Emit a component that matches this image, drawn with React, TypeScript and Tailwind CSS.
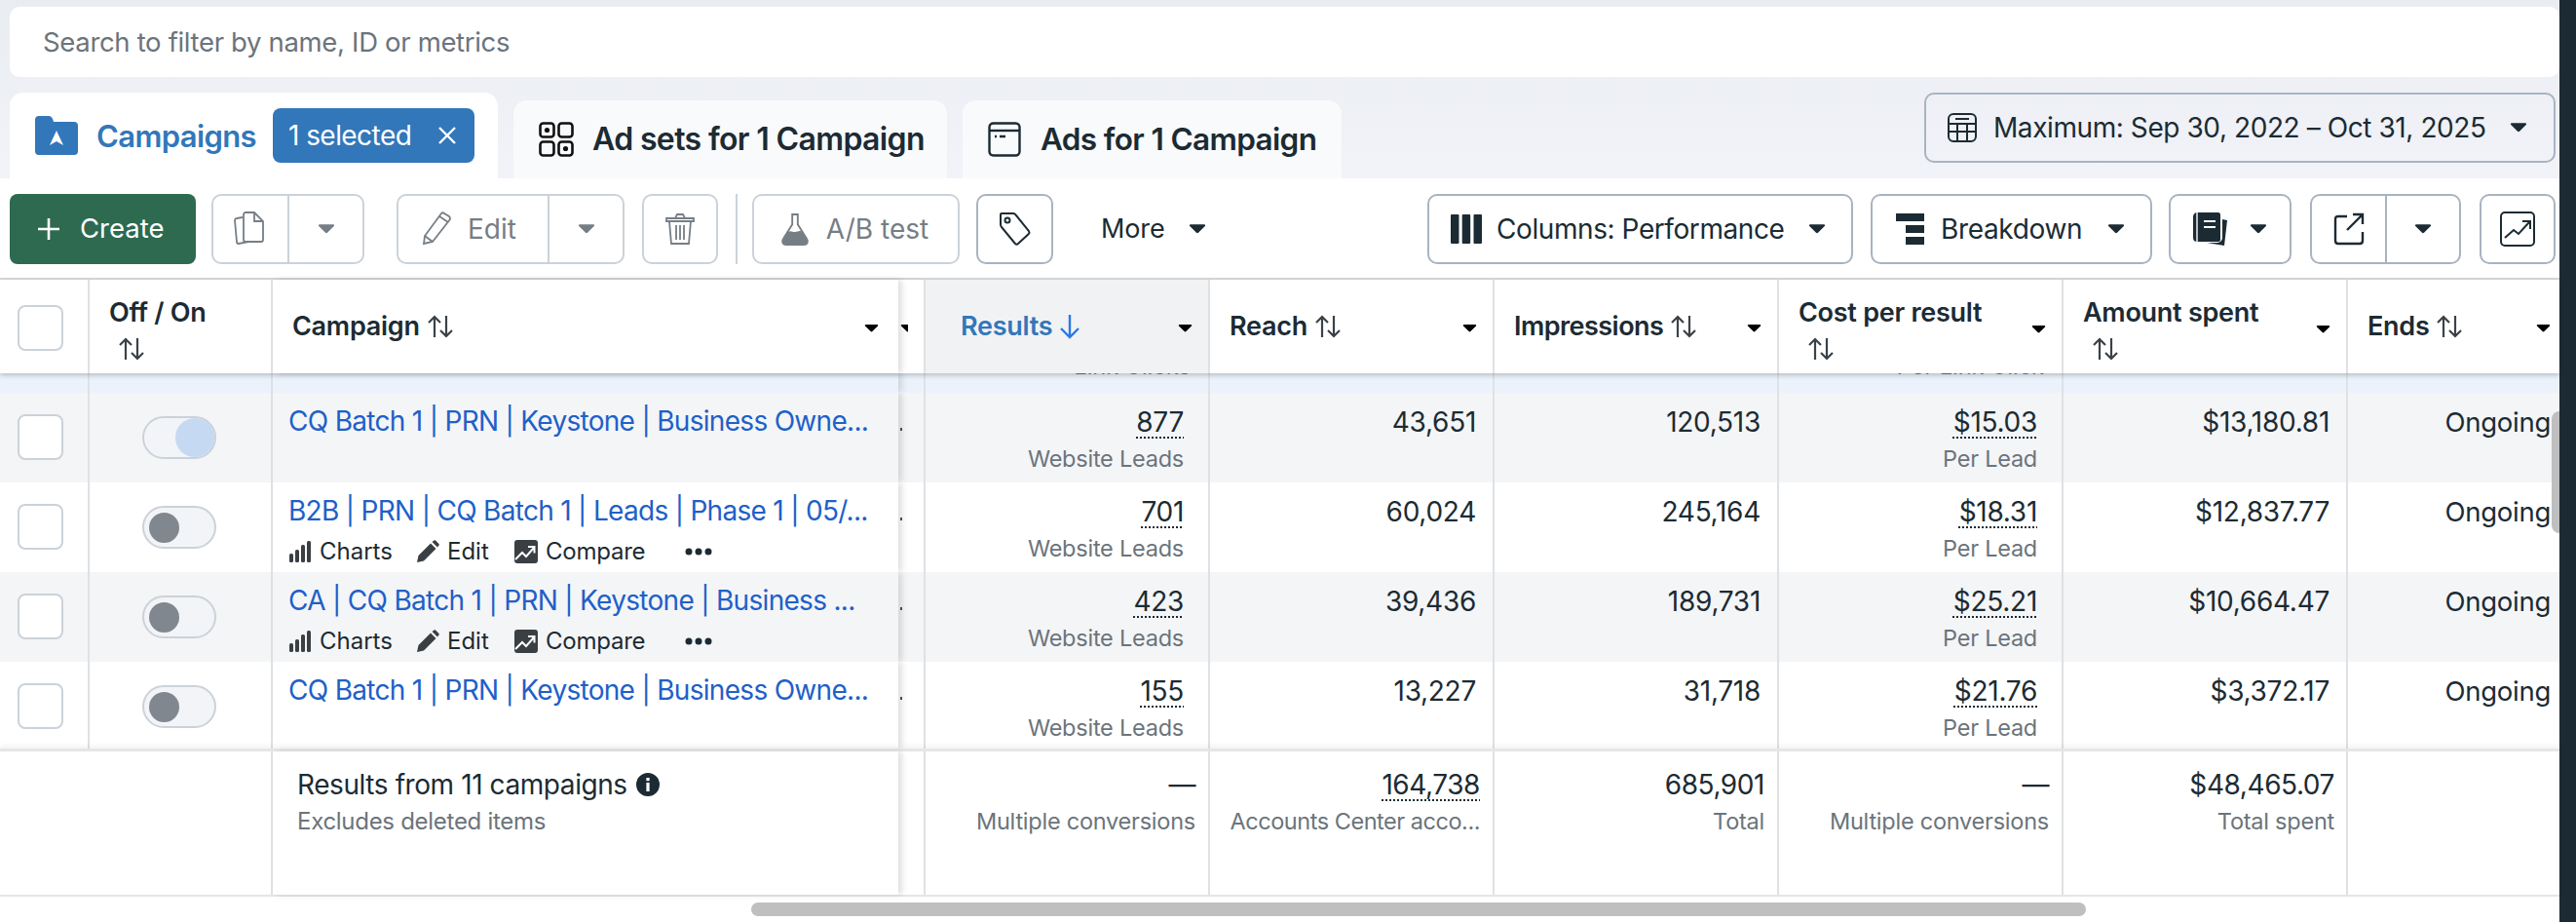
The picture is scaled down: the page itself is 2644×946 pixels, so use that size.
import React from "react";

const Caret = ({ c = "#1c2b33", w = 18 }: { c?: string; w?: number }) => (
  <svg width={w} height={w * 0.62} viewBox="0 0 18 11" className="shrink-0">
    <path d="M2 1.2h14c1 0 1.4 1 .8 1.7L10 9.6c-.6.6-1.4.6-2 0L1.2 2.9C.6 2.2 1 1.2 2 1.2z" fill={c} />
  </svg>
);

const SortArrows = () => (
  <svg width="30" height="26" viewBox="0 0 30 26" fill="none" stroke="#3a4248" strokeWidth="2.2" className="shrink-0">
    <path d="M9 24V3M3 9l6-6 6 6" />
    <path d="M21 2v21M15 17l6 6 6-6" />
  </svg>
);

const DownArrow = () => (
  <svg width="24" height="28" viewBox="0 0 24 28" fill="none" stroke="#2b78e4" strokeWidth="2.4" className="shrink-0">
    <path d="M12 2v23M3 16l9 9 9-9" />
  </svg>
);

const Tbtn = ({ cls, children }: { cls: string; children: React.ReactNode }) => (
  <div className={"h-[72px] rounded-[10px] border-2 flex items-center justify-center shrink-0 " + cls}>{children}</div>
);

const Toggle = ({ on }: { on?: boolean }) => (
  <div className={"w-[76px] h-[44px] rounded-full border-2 border-[#cbd2d9] bg-[#f2f4f8] flex items-center " + (on ? "justify-end" : "pl-[5px]")}>
    {on ? <div className="w-[40px] h-[40px] rounded-full bg-[#c5d9f2]" /> : <div className="w-[31px] h-[31px] rounded-full bg-[#80878f]" />}
  </div>
);

const Check = () => <div className="w-[47px] h-[47px] rounded-[8px] border-2 border-[#cbd2d9] bg-white" />;

const Actions = () => (
  <div className="flex items-center h-[36px] mt-[6px] text-[24px] text-[#1c2b33]">
    <svg width="24" height="24" viewBox="0 0 24 24" fill="#3a3f44" className="mr-[8px]">
      <rect x="1" y="14" width="4" height="9" rx="1.5" />
      <rect x="7" y="10" width="4" height="13" rx="1.5" />
      <rect x="13" y="5" width="4" height="18" rx="1.5" />
      <rect x="19" y="1" width="4" height="22" rx="1.5" />
    </svg>
    <span className="w-[99px]">Charts</span>
    <svg width="24" height="24" viewBox="0 0 24 24" fill="#3a3f44" className="mr-[8px]">
      <path d="M1 23l1.5-7L15 3.5l5.5 5.5L8 21.5z" />
      <path d="M16.5 2l2-1.5c.5-.4 1-.4 1.5 0l3.5 3.5c.4.5.4 1 0 1.5L22 7.5z" />
    </svg>
    <span className="w-[69px]">Edit</span>
    <svg width="24" height="24" viewBox="0 0 24 24" className="mr-[8px]">
      <rect x="0" y="0" width="24" height="24" rx="3" fill="#3a3f44" />
      <path d="M1 20l7-7 4 4 8-9M14 7h6.5v6.5" fill="none" stroke="#fff" strokeWidth="2" />
    </svg>
    <span className="w-[143px] tracking-[-0.01em]">Compare</span>
    <svg width="28" height="8" viewBox="0 0 28 8" fill="#1c2b33">
      <circle cx="4" cy="4" r="3.5" /><circle cx="14" cy="4" r="3.5" /><circle cx="24" cy="4" r="3.5" />
    </svg>
  </div>
);

const Metric = ({ w, v, sub, dotted }: { w: string; v: string; sub?: string; dotted?: boolean }) => (
  <div className={"h-full shrink-0 border-r-2 border-[#dfe1e4] flex flex-col items-end pt-[12px] " + w}>
    <div className={"leading-[36px] text-[28px] tracking-[-0.01em] text-[#1c2b33] " + (dotted ? "underline decoration-dotted decoration-2 underline-offset-[5px]" : "")}>{v}</div>
    {sub && <div className="leading-[40px] text-[23.5px] tracking-[-0.01em] text-[#6b747b]">{sub}</div>}
  </div>
);

type R = { name: string; on?: boolean; actions?: boolean; r: string; reach: string; imp: string; cpr: string; amt: string; bg: string };
const rows: R[] = [
  { name: "CQ Batch 1 | PRN | Keystone | Business Owne...", on: true, r: "877", reach: "43,651", imp: "120,513", cpr: "$15.03", amt: "$13,180.81", bg: "bg-[#f4f5f7]" },
  { name: "B2B | PRN | CQ Batch 1 | Leads | Phase 1 | 05/...", actions: true, r: "701", reach: "60,024", imp: "245,164", cpr: "$18.31", amt: "$12,837.77", bg: "bg-white" },
  { name: "CA | CQ Batch 1 | PRN | Keystone | Business ...", actions: true, r: "423", reach: "39,436", imp: "189,731", cpr: "$25.21", amt: "$10,664.47", bg: "bg-[#f4f5f7]" },
  { name: "CQ Batch 1 | PRN | Keystone | Business Owne...", r: "155", reach: "13,227", imp: "31,718", cpr: "$21.76", amt: "$3,372.17", bg: "bg-white" },
];

const Row = ({ d, h }: { d: R; h: string }) => (
  <div className={"flex overflow-hidden " + h + " " + d.bg}>
    <div className="w-[92px] shrink-0 border-r-2 border-[#dfe1e4] pl-[18px] pt-[22px]"><Check /></div>
    <div className="w-[188px] shrink-0 border-r-2 border-[#dfe1e4] pl-[54px] pt-[24px]"><Toggle on={d.on} /></div>
    <div className="w-[642px] shrink-0 pl-[16px] pt-[11px] shadow-[4px_0_6px_rgba(0,0,0,0.12)] relative">
      <div className="whitespace-nowrap leading-[36px] text-[28px] tracking-[-0.025em] text-[#2060c8]">{d.name}</div>
      {d.actions && <Actions />}
    </div>
    <div className="w-[28px] shrink-0 border-r-2 border-[#dfe1e4] pl-[2px] pt-[36px]"><div className="w-[2px] h-[3px] bg-[#4a5258]" /></div>
    <Metric w="w-[292px] pr-[25px]" v={d.r} sub="Website Leads" dotted />
    <Metric w="w-[292px] pr-[17px]" v={d.reach} />
    <Metric w="w-[292px] pr-[17px]" v={d.imp} />
    <Metric w="w-[292px] pr-[25px]" v={d.cpr} sub="Per Lead" dotted />
    <Metric w="w-[292px] pr-[17px]" v={d.amt} />
    <div className="flex-1 flex justify-end pr-[9px] pt-[12px] leading-[36px] text-[27.5px] tracking-[-0.01em] text-[#1c2b33]">Ongoing</div>
  </div>
);

const HeadCell = ({ w, label, wrap, extra, noCaret, children }: { w: string; label: string; wrap?: boolean; extra?: string; noCaret?: boolean; children?: React.ReactNode }) => (
  <div className={"h-full shrink-0 border-r-2 border-[#dfe1e4] flex justify-between pr-[16px] text-[27px] font-semibold tracking-[-0.01em] text-[#1c2b33] " + w + " " + (wrap ? "items-start pt-[16px]" : "items-center") + " " + (extra || "")}>
    {wrap ? (
      <div>
        <div className="leading-[36px]">{label}</div>
        <div className="h-[37px] flex items-center pl-[8px]"><SortArrows /></div>
      </div>
    ) : (
      <div className="flex items-center gap-[6px]"><span>{label}</span>{children || <SortArrows />}</div>
    )}
    {!noCaret && <div className={wrap ? "mt-[30px]" : "mt-[4px]"}><Caret c="#000" w={15} /></div>}
  </div>
);

const FootCell = ({ w, v, sub, dotted, subCls }: { w: string; v: string; sub: string; dotted?: boolean; subCls?: string }) => (
  <div className={"h-full shrink-0 border-r-2 border-[#dfe1e4] flex flex-col items-end pt-[16px] " + w}>
    <div className={"leading-[36px] text-[28px] tracking-[-0.015em] text-[#1c2b33] " + (dotted ? "underline decoration-dotted decoration-2 underline-offset-[5px]" : "")}>{v}</div>
    <div className={"leading-[40px] text-[23.5px] text-[#6b747b] whitespace-nowrap " + (subCls || "tracking-[-0.01em]")}>{sub}</div>
  </div>
);

export default function App() {
  const on = "border-[#a8b4c0]";
  const off = "border-[#cbd2d9] text-[#767e85]";
  return (
    <div className="w-[2644px] h-[946px] flex overflow-hidden bg-white text-[#1c2b33]" style={{ fontFamily: "Inter, 'Noto Sans', sans-serif" }}>
      <div className="w-[2627px] shrink-0 flex flex-col">
        <div className="h-[183px] shrink-0 bg-gradient-to-b from-[#e9edf2] to-[#f2f3f8] pt-[7px] flex flex-col">
          <div className="h-[72px] ml-[10px] bg-white rounded-[10px] flex items-center pl-[34px] pt-[2px] text-[27.5px] tracking-[-0.012em] text-[#6b747b]">
            Search to filter by name, ID or metrics
          </div>
          <div className="mt-[16px] h-[88px] flex pl-[10px] pr-[4px]">
            <div className="w-[501px] h-[88px] bg-white rounded-t-[14px] flex items-start pt-[16px] pl-[26px]">
              <svg width="44" height="40" viewBox="0 0 44 40" className="mt-[8px] shrink-0">
                <path d="M0 4a4 4 0 0 1 4-4h10c2 0 3 1 4 3l1 3h21a4 4 0 0 1 4 4v26a4 4 0 0 1-4 4H4a4 4 0 0 1-4-4z" fill="#3277b9" />
                <path d="M22 15l7 15-7-4-7 4z" fill="#fff" />
              </svg>
              <div className="ml-[19px] w-[164px] mt-[10px] whitespace-nowrap text-[31px] leading-[38px] font-semibold tracking-[-0.02em] text-[#3277b9]">Campaigns</div>
              <div className="ml-[17px] w-[207px] h-[56px] rounded-[8px] bg-[#3277b9] text-white flex items-center pl-[16px] text-[28px] tracking-[-0.02em]">
                <span className="w-[153px]">1 selected</span>
                <svg width="20" height="20" viewBox="0 0 20 20" stroke="#fff" strokeWidth="2.4"><path d="M2 2l16 16M18 2L2 18" /></svg>
              </div>
            </div>
            <div className="ml-[16px] w-[445px] h-[80px] mt-[8px] bg-[#f9fafc] rounded-t-[14px] flex items-center pl-[26px]">
              <svg width="36" height="36" viewBox="0 0 36 36" fill="none" stroke="#111" strokeWidth="2.6" className="mr-[19px]">
                <rect x="1.5" y="1.5" width="14" height="14" rx="3" /><rect x="20.5" y="1.5" width="14" height="14" rx="3" />
                <rect x="1.5" y="20.5" width="14" height="14" rx="3" /><rect x="20.5" y="20.5" width="14" height="14" rx="3" />
                <circle cx="8.5" cy="8.5" r="2.6" fill="#111" stroke="none" /><circle cx="27.5" cy="27.5" r="2.6" fill="#111" stroke="none" />
              </svg>
              <span className="text-[32px] font-semibold tracking-[-0.02em] whitespace-nowrap">Ad sets for 1 Campaign</span>
            </div>
            <div className="ml-[16px] w-[389px] h-[80px] mt-[8px] bg-[#f9fafc] rounded-t-[14px] flex items-center pl-[26px]">
              <svg width="34" height="36" viewBox="0 0 34 36" fill="none" stroke="#1c2b33" strokeWidth="2.4" className="mr-[20px]">
                <rect x="1.5" y="1.5" width="31" height="33" rx="4" />
                <path d="M1.5 9h31" />
                <path d="M7 15h2M12 15h6" />
              </svg>
              <span className="text-[31.5px] font-semibold tracking-[-0.02em] whitespace-nowrap">Ads for 1 Campaign</span>
            </div>
            <div className="ml-auto w-[648px] h-[72px] rounded-[10px] border-2 border-[#a8b4c0] flex items-center pl-[22px] pr-[27px]">
              <svg width="30" height="30" viewBox="0 0 30 30" fill="none" stroke="#1c2b33" strokeWidth="2" className="mr-[17px]">
                <rect x="1" y="1" width="28" height="28" rx="5" />
                <path d="M8 6h14M1 11h28M1 19h28M10 11v18M20 11v18" />
              </svg>
              <span className="flex-1 text-[28px] tracking-[-0.015em] whitespace-nowrap">Maximum: Sep 30, 2022 – Oct 31, 2025</span>
              <Caret />
            </div>
          </div>
        </div>

        <div className="h-[104px] shrink-0 bg-white border-b-2 border-[#d9d9d9] flex justify-between items-center pt-[2px] pl-[10px] pr-[4px] rounded-tl-[10px]">
          <div className="flex items-center">
            <div className="w-[191px] h-[72px] rounded-[8px] bg-[#2d6a4f] text-white flex items-center pl-[28px] text-[27.5px]">
              <svg width="24" height="24" viewBox="0 0 24 24" stroke="#fff" strokeWidth="2.6" className="mr-[20px]"><path d="M12 1v22M1 12h22" /></svg>
              Create
            </div>
            <Tbtn cls={"ml-[16px] w-[157px] " + off}>
              <div className="w-[78px] h-full border-r-2 border-[#cbd2d9] flex items-center justify-center">
                <svg width="34" height="36" viewBox="0 0 34 36" fill="none" stroke="#767e85" strokeWidth="1.8">
                  <path d="M9 6L3 7c-1 0-2 1-2 2l2 22c0 1 1 2 2 2l10-2" />
                  <path d="M10 3c0-1 1-2 2-2h9l9 9v19c0 1-1 2-2 2H12c-1 0-2-1-2-2zM21 1v9h9" />
                </svg>
              </div>
              <div className="flex-1 flex justify-center"><Caret c="#767e85" /></div>
            </Tbtn>
            <Tbtn cls={"ml-[33px] w-[234px] " + off}>
              <div className="w-[155px] h-full border-r-2 border-[#cbd2d9] flex items-center pl-[24px] text-[28px]">
                <svg width="30" height="36" viewBox="0 0 30 36" fill="none" stroke="#767e85" strokeWidth="1.8" className="mr-[17px]">
                  <path d="M2 33l1-8L20 2c1-1 2-1 3 0l5 3c1 1 1 2 1 3L11 31z" />
                  <path d="M18 5l9 6M3 25l8 6" />
                </svg>
                Edit
              </div>
              <div className="flex-1 flex justify-center"><Caret c="#767e85" /></div>
            </Tbtn>
            <Tbtn cls={"ml-[18px] w-[78px] " + off}>
              <svg width="30" height="34" viewBox="0 0 30 34" fill="none" stroke="#767e85" strokeWidth="1.8">
                <path d="M1 6h28v3H1zM10 6l2-4h6l2 4M4 9l2 23h18l2-23M11 13v15M15 13v15M19 13v15" />
              </svg>
            </Tbtn>
            <div className="ml-[18px] w-[2px] h-[72px] bg-[#cbd2d9]" />
            <Tbtn cls={"ml-[15px] w-[213px] " + off}>
              <svg width="30" height="36" viewBox="0 0 32 36" className="mr-[17px] -ml-[3px]">
                <path d="M12 2h8M13 2v11L3 29c-2 3 0 6 3 6h20c3 0 5-3 3-6L19 13V2" fill="none" stroke="#767e85" strokeWidth="2" />
                <path d="M8 21c4-2 6 1 9 0s5-1 6-1l6 10c1 3 0 5-3 5H6c-3 0-4-3-3-5z" fill="#767e85" />
              </svg>
              <span className="text-[28px]">A/B test</span>
            </Tbtn>
            <Tbtn cls={"ml-[17px] w-[79px] " + on}>
              <svg width="34" height="36" viewBox="0 0 34 36" fill="none" stroke="#1c2b33" strokeWidth="2">
                <path d="M3 2h12c1 0 2 .5 2.5 1.5L31 20c.7 1 .6 2-.2 3L20 33c-1 1-2 1-3 0L3 16c-1-1-1-2-1-3V3c0-.6.4-1 1-1z" />
                <circle cx="9" cy="9" r="2.5" />
              </svg>
            </Tbtn>
            <span className="ml-[49px] w-[66px] text-[27px] tracking-[-0.005em]">More</span>
            <div className="ml-[24px]"><Caret /></div>
          </div>
          <div className="flex items-center">
            <Tbtn cls={"w-[437px] justify-start pl-[22px] pr-[26px] " + on}>
              <svg width="32" height="30" viewBox="0 0 32 30" fill="#1c2b33" className="mr-[15px]">
                <rect x="0" y="0" width="8.5" height="30" rx="1" /><rect x="11.7" y="0" width="8.5" height="30" rx="1" /><rect x="23.5" y="0" width="8.5" height="30" rx="1" />
              </svg>
              <span className="flex-1 text-[28px] tracking-[-0.015em] whitespace-nowrap">Columns: Performance</span>
              <Caret />
            </Tbtn>
            <Tbtn cls={"ml-[18px] w-[289px] justify-start pl-[24px] pr-[26px] " + on}>
              <svg width="30" height="32" viewBox="0 0 30 32" fill="#1c2b33" className="mr-[16px]">
                <rect x="0" y="0" width="29" height="8" /><rect x="10" y="12" width="19" height="8" /><rect x="10" y="24" width="19" height="8" />
              </svg>
              <span className="flex-1 text-[28px] tracking-[-0.012em]">Breakdown</span>
              <Caret />
            </Tbtn>
            <Tbtn cls={"ml-[17px] w-[126px] gap-[22px] " + on}>
              <svg width="36" height="36" viewBox="0 0 36 36" fill="#1c2b33">
                <path d="M30 8l5 1-3 26-18-3h10c3 0 6-2 6-5z" />
                <path d="M4 1h22c1 0 2 1 2 2v26c0 1-1 2-2 2H4c-2 0-4-1-4-4V5c0-2 2-4 4-4z" />
                <path d="M11 10h12M11 16h12" stroke="#fff" strokeWidth="2" />
                <path d="M4 1v30" stroke="#fff" strokeWidth="1.4" />
              </svg>
              <Caret />
            </Tbtn>
            <Tbtn cls={"ml-[19px] w-[155px] " + on}>
              <div className="w-[77px] h-full border-r-2 border-[#a8b4c0] flex items-center justify-center">
                <svg width="32" height="34" viewBox="0 0 32 34" fill="none" stroke="#1c2b33" strokeWidth="2.4">
                  <path d="M14 4H5c-2 0-3 1-3 3v22c0 2 1 3 3 3h22c2 0 3-1 3-3v-9" />
                  <path d="M14 18L30 2M20 2h10v10" />
                </svg>
              </div>
              <div className="flex-1 flex justify-center"><Caret /></div>
            </Tbtn>
            <Tbtn cls={"ml-[19px] w-[78px] " + on}>
              <svg width="36" height="36" viewBox="0 0 36 36" fill="none" stroke="#1c2b33" strokeWidth="2">
                <rect x="1" y="1" width="34" height="34" rx="4" />
                <path d="M5 27l9-8 5 4 11-12M23 10h8v8" />
              </svg>
            </Tbtn>
          </div>
        </div>

        <div className="relative flex-1 flex flex-col min-h-0">
          <div className="h-[96px] shrink-0 flex bg-white relative z-10 shadow-[0_2px_5px_rgba(0,0,0,0.22)]">
            <div className="w-[92px] shrink-0 border-r-2 border-[#dfe1e4] pl-[18px] pt-[26px]"><Check /></div>
            <HeadCell w="w-[188px] pl-[20px]" label="Off / On" wrap noCaret />
            <div className="w-[642px] shrink-0 flex items-center justify-between pl-[20px] pr-[20px] text-[27px] font-semibold tracking-[-0.01em] shadow-[4px_0_6px_rgba(0,0,0,0.12)] relative">
              <div className="flex items-center gap-[6px]"><span>Campaign</span><SortArrows /></div>
              <div className="mt-[4px]"><Caret c="#000" w={15} /></div>
            </div>
            <div className="w-[28px] shrink-0 border-r-2 border-[#dfe1e4] flex items-center pl-[2px] overflow-hidden"><div className="w-[8px] overflow-hidden mt-[4px]"><Caret c="#000" w={15} /></div></div>
            <HeadCell w="w-[292px] pl-[36px] bg-[#f1f2f4]" label="Results" extra="!text-[#3277b9]"><DownArrow /></HeadCell>
            <HeadCell w="w-[292px] pl-[20px]" label="Reach" />
            <HeadCell w="w-[292px] pl-[20px]" label="Impressions" extra="!tracking-[-0.02em]" />
            <HeadCell w="w-[292px] pl-[20px]" label="Cost per result" wrap />
            <HeadCell w="w-[292px] pl-[20px]" label="Amount spent" wrap />
            <div className="flex-1 flex items-center justify-between pl-[20px] pr-[9px] text-[27px] font-semibold tracking-[-0.01em]">
              <div className="flex items-center gap-[6px]"><span>Ends</span><SortArrows /></div>
              <div className="mt-[4px]"><Caret c="#000" w={15} /></div>
            </div>
          </div>

          <div className="h-[20px] shrink-0 flex bg-[#ebf2fb] overflow-hidden">
            <div className="w-[92px] shrink-0 border-r-2 border-[#dfe1e4]" />
            <div className="w-[188px] shrink-0 border-r-2 border-[#dfe1e4]" />
            <div className="w-[642px] shrink-0 shadow-[4px_0_6px_rgba(0,0,0,0.12)] relative" />
            <div className="w-[28px] shrink-0 border-r-2 border-[#dfe1e4]" />
            <div className="w-[292px] shrink-0 border-r-2 border-[#dfe1e4] pr-[18px] text-right text-[23.5px] leading-[30px] -mt-[22px] text-[#6b747b]">Link Clicks</div>
            <div className="w-[292px] shrink-0 border-r-2 border-[#dfe1e4]" />
            <div className="w-[292px] shrink-0 border-r-2 border-[#dfe1e4]" />
            <div className="w-[292px] shrink-0 border-r-2 border-[#dfe1e4] pr-[18px] text-right text-[23.5px] leading-[30px] -mt-[22px] text-[#6b747b]">Per Link Click</div>
            <div className="w-[292px] shrink-0 border-r-2 border-[#dfe1e4]" />
          </div>

          <Row d={rows[0]} h="h-[92px] shrink-0" />
          <Row d={rows[1]} h="h-[92px] shrink-0" />
          <Row d={rows[2]} h="h-[92px] shrink-0" />
          <Row d={rows[3]} h="h-[89px] shrink-0" />

          <div className="h-[152px] shrink-0 flex bg-white border-t-[3px] border-b-2 border-[#e6e6e6] relative shadow-[0_-3px_5px_rgba(0,0,0,0.05)]">
            <div className="w-[280px] shrink-0 border-r-2 border-[#dfe1e4]" />
            <div className="w-[642px] shrink-0 pl-[25px] pt-[16px] shadow-[4px_0_6px_rgba(0,0,0,0.12)] relative">
              <div className="flex items-center leading-[36px] text-[28px] tracking-[-0.015em] whitespace-nowrap">
                Results from 11 campaigns
                <svg width="24" height="24" viewBox="0 0 24 24" className="ml-[9px]">
                  <circle cx="12" cy="12" r="12" fill="#1c2b33" />
                  <rect x="10.4" y="10" width="3.2" height="9" fill="#fff" />
                  <rect x="10.4" y="5" width="3.2" height="3.2" fill="#fff" />
                </svg>
              </div>
              <div className="leading-[40px] text-[24px] tracking-[-0.012em] text-[#6b747b]">Excludes deleted items</div>
            </div>
            <div className="w-[28px] shrink-0 border-r-2 border-[#dfe1e4]" />
            <FootCell w="w-[292px] pr-[13px]" v="—" sub="Multiple conversions" />
            <FootCell w="w-[292px] pr-[13px]" v="164,738" sub="Accounts Center acco..." subCls="tracking-[-0.02em]" dotted />
            <FootCell w="w-[292px] pr-[13px]" v="685,901" sub="Total" />
            <FootCell w="w-[292px] pr-[13px]" v="—" sub="Multiple conversions" />
            <FootCell w="w-[292px] pr-[12px]" v="$48,465.07" sub="Total spent" />
          </div>

          <div className="flex-1 pt-[6px] pl-[771px]">
            <div className="w-[1370px] h-[14px] rounded-full bg-[#bfbfbf]" />
          </div>

          <div className="absolute left-[2619px] top-[135px] w-[8px] h-[125px] rounded-l-full bg-[#bfbfbf] z-20" />
        </div>
      </div>
      <div className="flex-1 bg-[#1c2b33]" />
    </div>
  );
}
